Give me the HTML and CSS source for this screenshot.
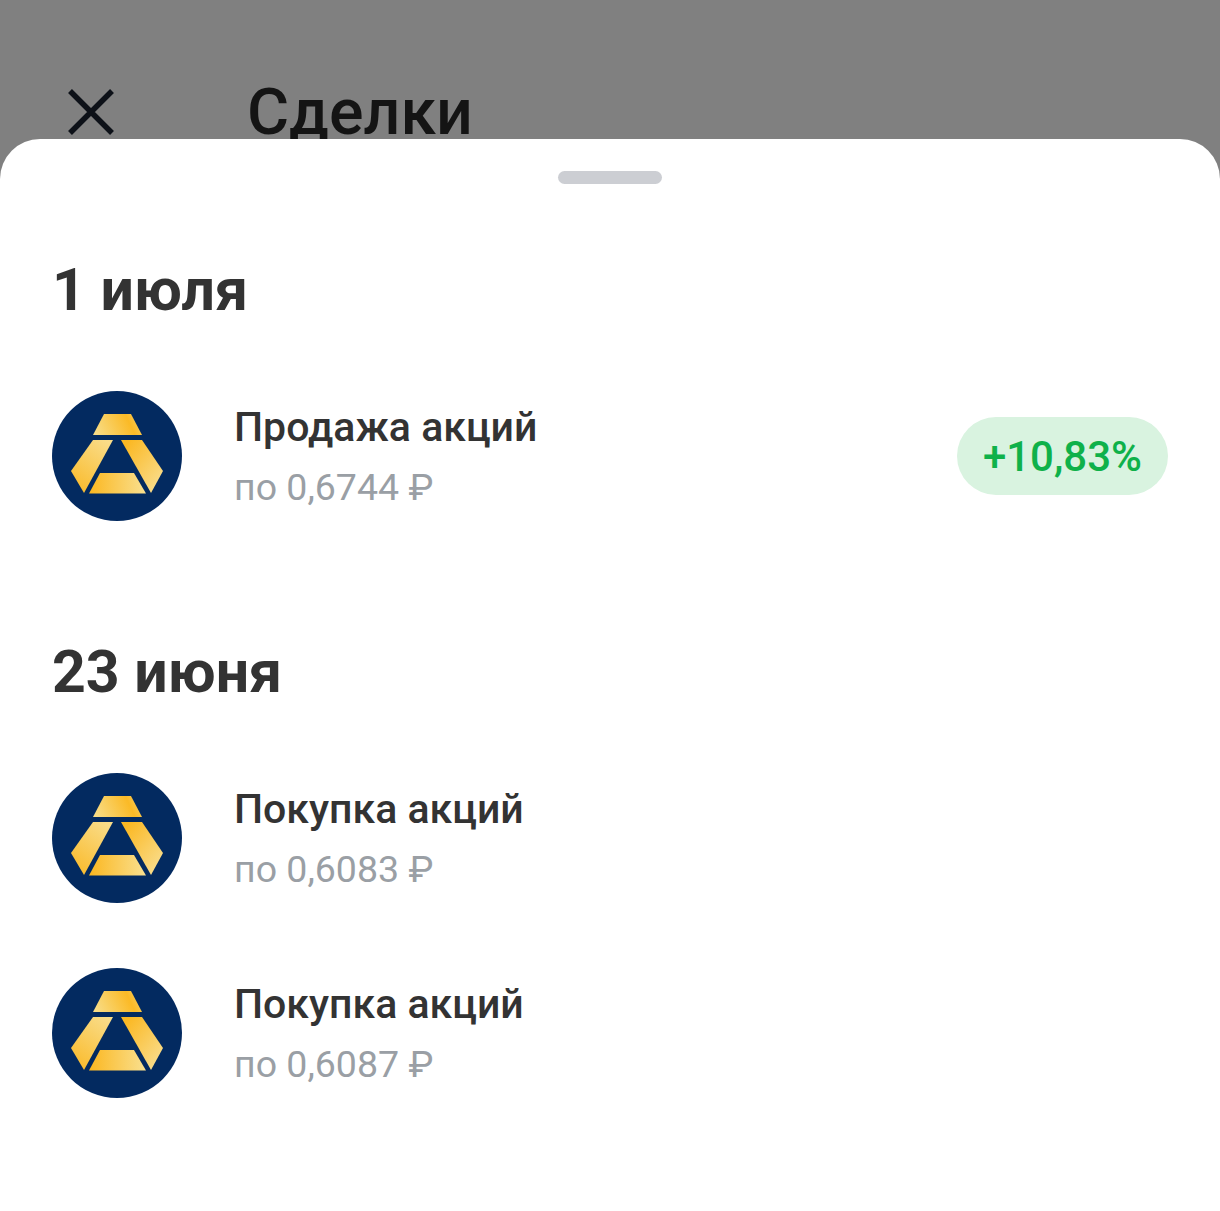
FILE: index.html
```html
<!DOCTYPE html>
<html lang="ru">

<head>
    <meta charset="UTF-8">
    <title>Сделки</title>
    <link rel="stylesheet" href="styles.css">
</head>

<body>
    <svg class="defs" width="0" height="0">
        <defs>
            <linearGradient id="oro-arriba" x1="0" y1="0.6" x2="1" y2="0.4">
                <stop offset="0" stop-color="#f8dc85" />
                <stop offset="0.75" stop-color="#fbba26" />
                <stop offset="1" stop-color="#f8cb5c" />
            </linearGradient>
            <linearGradient id="oro-izq" x1="0.8" y1="0" x2="0.2" y2="1">
                <stop offset="0" stop-color="#f9dc88" />
                <stop offset="1" stop-color="#fabb2c" />
            </linearGradient>
            <linearGradient id="oro-der" x1="0.1" y1="0.1" x2="0.9" y2="0.9">
                <stop offset="0" stop-color="#fbb823" />
                <stop offset="1" stop-color="#f9dd8c" />
            </linearGradient>
            <linearGradient id="oro-abajo" x1="0" y1="0.5" x2="1" y2="0.5">
                <stop offset="0" stop-color="#fbb720" />
                <stop offset="1" stop-color="#f9e090" />
            </linearGradient>
            <symbol id="logo" viewBox="0 0 130 130">
                <circle cx="65" cy="65" r="65" fill="#032a60" />
                <path fill="url(#oro-arriba)" d="M52 23H79L90 44H41Z" />
                <path fill="url(#oro-izq)" d="M41 49H61L32 102L19 80Z" />
                <path fill="url(#oro-der)" d="M69 49H90L111 80L99 102Z" />
                <path fill="url(#oro-abajo)" d="M48 82H82L94 102.500H37Z" />
            </symbol>
        </defs>
    </svg>

    <header class="cabecera">
        <svg class="cerrar" viewBox="0 0 48 48">
            <path d="M3 3L45 45M45 3L3 45" />
        </svg>
        <h1 class="titulo">Сделки</h1>
    </header>

    <main class="hoja">
        <div class="asa"></div>

        <section class="grupo grupo-primero">
            <h2 class="fecha">1 июля</h2>
            <div class="fila">
                <svg class="logo"><use href="#logo" /></svg>
                <div class="textos">
                    <div class="nombre">Продажа акций</div>
                    <div class="precio">по 0,6744 ₽</div>
                </div>
                <div class="insignia">+10,83%</div>
            </div>
        </section>

        <section class="grupo">
            <h2 class="fecha">23 июня</h2>
            <div class="fila">
                <svg class="logo"><use href="#logo" /></svg>
                <div class="textos">
                    <div class="nombre">Покупка акций</div>
                    <div class="precio">по 0,6083 ₽</div>
                </div>
            </div>
            <div class="fila">
                <svg class="logo"><use href="#logo" /></svg>
                <div class="textos">
                    <div class="nombre">Покупка акций</div>
                    <div class="precio">по 0,6087 ₽</div>
                </div>
            </div>
        </section>
    </main>
</body>

</html>
```

FILE: styles.css
```css
* {
    box-sizing: border-box;
}

html,
body {
    margin: 0;
    height: 100%;
}

body {
    background-color: #808080;
    font-family: Roboto, "Noto Sans", sans-serif;
    overflow: hidden;
}

.defs {
    display: block;
    height: 0;
}

.cabecera {
    height: 139px;
    overflow: hidden;
    display: flex;
    align-items: flex-start;
    padding: 79px 0 0 67px;
}

.cerrar {
    width: 48px;
    height: 48px;
    margin-top: 9px;
    fill: none;
    stroke: #0d1118;
    stroke-width: 5.500;
}

.titulo {
    margin: 0 0 0 132px;
    font-size: 64.500px;
    line-height: 66px;
    font-weight: 500;
    color: #141414;
}

.hoja {
    height: 1072px;
    background-color: #fff;
    border-radius: 40px 40px 0 0;
    padding: 32px 52px 0;
}

.asa {
    width: 104px;
    height: 13px;
    margin: 0 auto;
    border-radius: 7px;
    background-color: #ccced3;
}

.grupo {
    margin-top: 118px;
}

.grupo-primero {
    margin-top: 73px;
}

.fecha {
    margin: 0 0 68px;
    font-size: 59px;
    line-height: 66px;
    font-weight: 700;
    color: #333;
}

.fila {
    display: flex;
    align-items: center;
    height: 130px;
    margin-bottom: 65px;
}

.logo {
    width: 130px;
    height: 130px;
    flex: none;
}

.textos {
    margin-left: 52px;
    margin-top: 1px;
    flex: 1;
}

.nombre {
    font-size: 41px;
    line-height: 60px;
    font-weight: 500;
    color: #333;
}

.precio {
    font-size: 37.500px;
    line-height: 60px;
    color: #9a9fa5;
}

.insignia {
    height: 78px;
    padding: 0 26px;
    border-radius: 39px;
    background-color: #d9f3e0;
    color: #0fb14a;
    font-size: 42px;
    font-weight: 500;
    line-height: 80px;
}
```
